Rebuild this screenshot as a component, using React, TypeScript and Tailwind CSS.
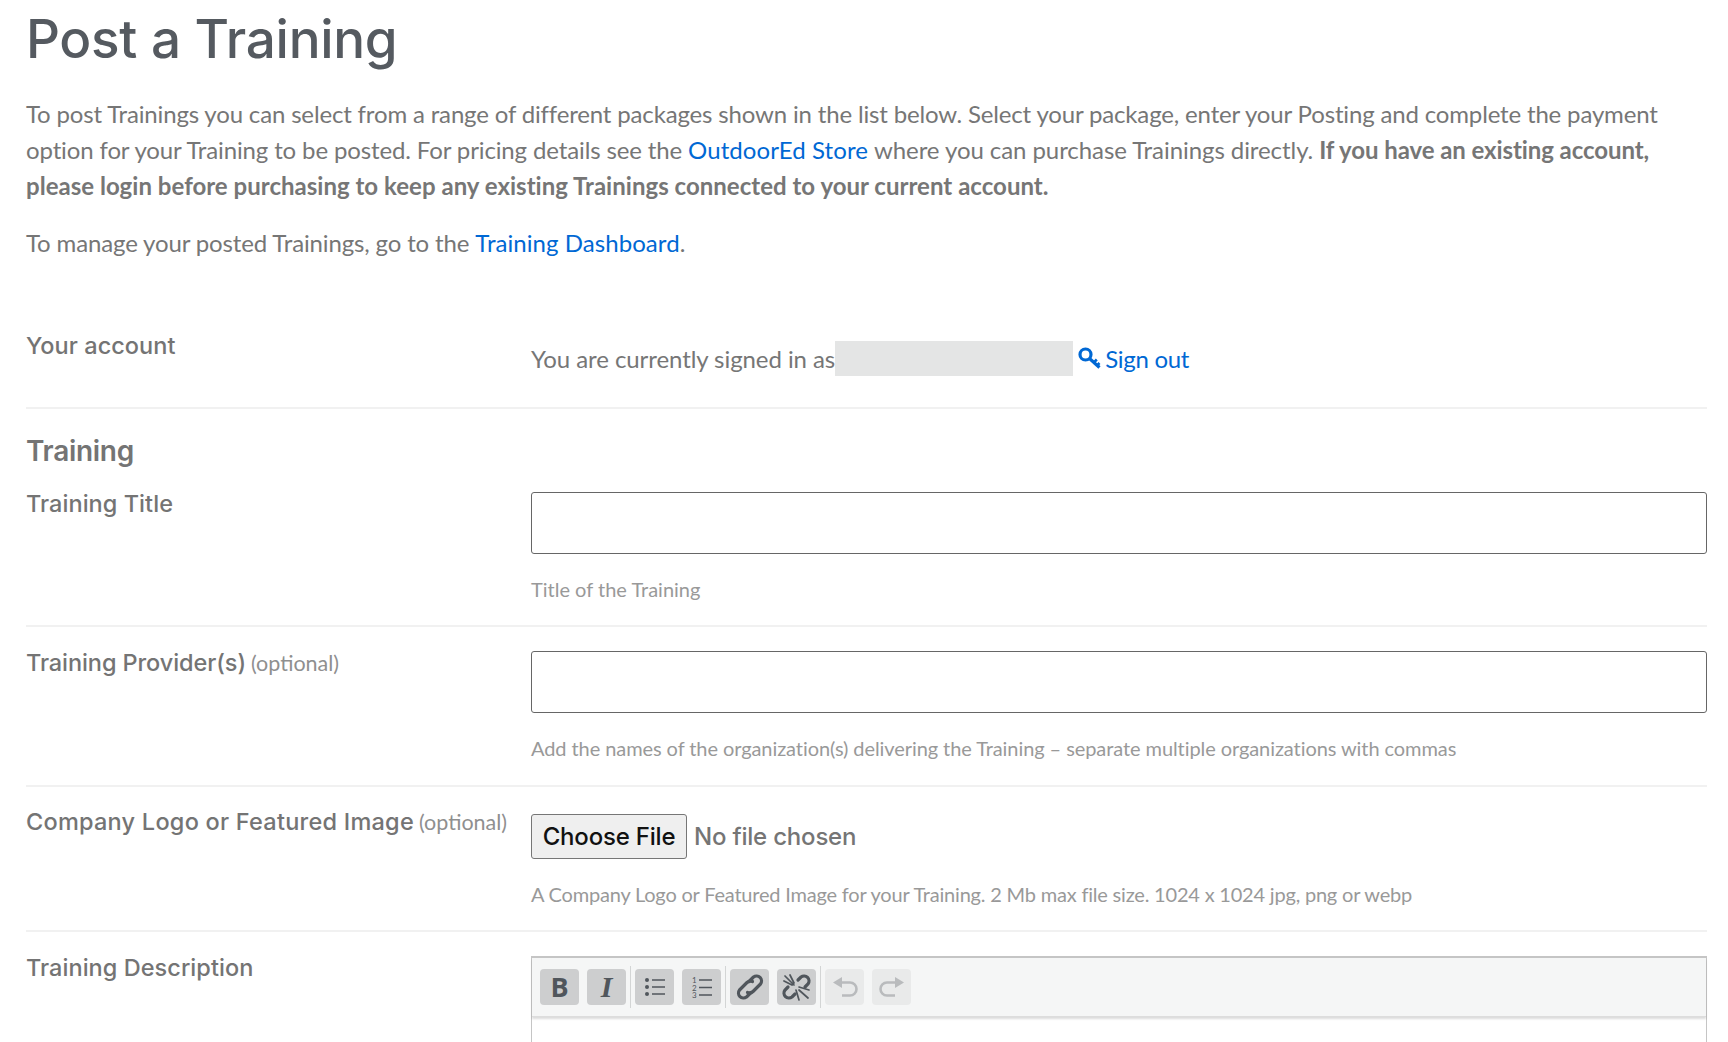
import React from "react";

const HEAD = "font-['Inter','Noto_Sans',sans-serif]";

function Btn({ children, off }: { children: React.ReactNode; off?: boolean }) {
  return (
    <span className={`flex h-[36px] w-[39px] items-center justify-center rounded-[4px] ${off ? "bg-[#e9eaea] text-[#b9bbbd]" : "bg-[#cdcecf] text-[#50565c]"}`}>
      {children}
    </span>
  );
}

const Sep = () => <span className="mx-[4px] h-[42px] w-px shrink-0 bg-[#d3d5d5]" />;

function Label({ children, optional, lift, track = "tracking-[0.05px]" }: { children: React.ReactNode; optional?: boolean; lift: string; track?: string }) {
  return (
    <div className={`w-[505px] shrink-0 whitespace-nowrap ${lift}`}>
      <span className={`${HEAD} text-[23.5px] font-medium text-[#747474] ${track}`}>{children}</span>
      {optional && <span className="ml-[5px] text-[21.5px] text-[#8f8f8f]">(optional)</span>}
    </div>
  );
}

const Hint = ({ children, track }: { children: React.ReactNode; track: string }) => (
  <p className={`mt-[19px] text-[20px] leading-[32px] text-[#999999] ${track}`}>{children}</p>
);

const TextBox = () => (
  <input type="text" aria-label="text" className="block h-[62px] w-full rounded-[3px] border border-[#666666] bg-white" />
);

export default function App() {
  return (
    <div className="h-[1042px] overflow-hidden bg-white pl-[26px] pr-[21px] font-['Lato',sans-serif] text-[24px] leading-[36px] text-[#767676]">
      <h1 className={`${HEAD} mb-[28px] pt-[10px] text-[53px] font-medium leading-[58px] tracking-[-0.3px] text-[#555a60]`}>Post a Training</h1>
      <p className="mb-[21px] tracking-[-0.16px]">
        To post Trainings you can select from a range of different packages shown in the list below. Select your package, enter your Posting and complete the payment{" "}
        <span className="tracking-[-0.13px]">option for your Training to be posted. For pricing details see the</span>{" "}
        <a className="tracking-[0.08px] text-[#0068d4]">OutdoorEd Store</a>{" "}
        <span className="tracking-[-0.07px]">where you can purchase Trainings directly.</span>{" "}
        <strong className="font-bold tracking-[-0.08px]">If you have an existing account,</strong>{" "}
        <strong className="font-bold tracking-[0.02px]">please login before purchasing to keep any existing Trainings connected to your current account.</strong>
      </p>
      <p className="tracking-[-0.14px]">
        To manage your posted Trainings, go to the <a className="tracking-[0.06px] text-[#0068d4]">Training Dashboard</a>.
      </p>

      <div className="mt-[68px] flex h-[80px] border-b-2 border-[#f1f1f1]">
        <Label lift="-mt-[2px]">Your account</Label>
        <div className="flex h-[36px] items-center pt-[23px]">
          <span className="whitespace-nowrap tracking-[-0.07px]">You are currently signed in as</span>
          <span className="h-[35px] w-[238px] bg-[#e4e5e5]" />
          <a className="ml-[5px] flex items-center gap-[4px] tracking-[-0.3px] text-[#0068d4]">
            <svg width="23" height="23" viewBox="0 0 23 23" fill="none" stroke="currentColor">
              <circle cx="7.5" cy="7.5" r="5.5" strokeWidth="3.2" />
              <path d="M11.5 11.5L21.5 20.5" strokeWidth="3.2" />
              <path d="M15.8 15.5l3-3M19 18.5l2.5-2.5" strokeWidth="2.6" />
            </svg>
            Sign out
          </a>
        </div>
      </div>

      <h2 className={`${HEAD} mt-[23px] text-[28px] font-semibold leading-[38px] tracking-[-0.3px] text-[#747474]`}>Training</h2>
      <div className="mt-[22px] flex h-[135px] border-b-2 border-[#f1f1f1]">
        <Label lift="-mt-[7px]">Training Title</Label>
        <div className="flex-1">
          <TextBox />
          <Hint track="">Title of the Training</Hint>
        </div>
      </div>

      <div className="flex h-[160px] border-b-2 border-[#f1f1f1] pt-[24px]">
        <Label optional lift="-mt-[7px]" track="tracking-[-0.08px]">Training Provider(s)</Label>
        <div className="flex-1">
          <TextBox />
          <Hint track="tracking-[-0.08px]">Add the names of the organization(s) delivering the Training – separate multiple organizations with commas</Hint>
        </div>
      </div>

      <div className="flex h-[145px] border-b-2 border-[#f1f1f1] pt-[27px]">
        <Label optional lift="-mt-[11px]" track="tracking-[0.24px]">Company Logo or Featured Image</Label>
        <div className="flex-1">
          <div className="flex items-center">
            <span className={`${HEAD} flex h-[45px] w-[156px] items-center justify-center rounded-[3px] border border-[#767676] bg-[#efefef] text-[24px] font-medium tracking-[-0.2px] text-[#111111]`}>Choose File</span>
            <span className={`${HEAD} ml-[7px] text-[24px] font-medium tracking-[-0.2px] text-[#757575]`}>No file chosen</span>
          </div>
          <Hint track="tracking-[-0.2px]">A Company Logo or Featured Image for your Training. 2 Mb max file size. 1024 x 1024 jpg, png or webp</Hint>
        </div>
      </div>

      <div className="flex pt-[24px]">
        <Label lift="-mt-[7px]">Training Description</Label>
        <div className="flex-1 border-x border-t-2 border-[#c5c5c5]">
          <div className="flex h-[59px] items-center border-b border-[#dddddd] bg-[#f5f6f6] pl-[8px] pb-[1px] shadow-[0_2px_2px_rgba(0,0,0,0.14)]">
            <Btn><span className="font-['Open_Sans',sans-serif] text-[27px] font-bold leading-none">B</span></Btn>
            <span className="w-[8px]" />
            <Btn><span className="font-['Liberation_Serif',serif] text-[30px] font-bold italic leading-none">I</span></Btn>
            <Sep />
            <Btn>
              <svg width="22" height="22" viewBox="0 0 22 22" fill="none" stroke="currentColor" strokeWidth="1.6">
                <circle cx="3" cy="4" r="2" fill="currentColor" stroke="none" />
                <circle cx="3" cy="11" r="2" fill="currentColor" stroke="none" />
                <circle cx="3" cy="18" r="2" fill="currentColor" stroke="none" />
                <path d="M8 4h13M8 11h13M8 18h13" />
              </svg>
            </Btn>
            <span className="w-[8px]" />
            <Btn>
              <svg width="22" height="24" viewBox="0 0 22 24" fill="none" stroke="currentColor" strokeWidth="1.6">
                <text x="1" y="8" fontSize="8" fill="currentColor" stroke="none" fontFamily="Lato">1</text>
                <text x="1" y="15.5" fontSize="8" fill="currentColor" stroke="none" fontFamily="Lato">2</text>
                <text x="1" y="23" fontSize="8" fill="currentColor" stroke="none" fontFamily="Lato">3</text>
                <path d="M8 5h13M8 12.5h13M8 20h13" />
              </svg>
            </Btn>
            <Sep />
            <Btn>
              <svg width="28" height="28" viewBox="0 0 28 28" fill="none" stroke="currentColor" strokeWidth="3.2" strokeLinecap="round" strokeLinejoin="round">
                <path d="M13 8.5l4.5-4.5a5 5 0 0 1 7 7L17 18.5a5 5 0 0 1-5.5 1" />
                <path d="M15 19.5l-4.5 4.5a5 5 0 0 1-7-7L11 9.5a5 5 0 0 1 5.5-1" />
              </svg>
            </Btn>
            <span className="w-[8px]" />
            <Btn>
              <svg width="30" height="28" viewBox="0 0 30 28" fill="none" stroke="currentColor" strokeLinecap="round">
                <path d="M16 7l3-3a5 5 0 0 1 7 7l-3 3" strokeWidth="3.2" />
                <path d="M13 21l-3 3a5 5 0 0 1-7-7l3-3" strokeWidth="3.2" />
                <path d="M3 3l9 9M8 2l4 8M2 8l8 4M17 17l9 8M17 14l10 3M14 17l3 10" strokeWidth="1.7" />
              </svg>
            </Btn>
            <Sep />
            <Btn off>
              <svg width="26" height="24" viewBox="0 0 26 24" fill="none">
                <path d="M10 2v11L1 7.5z" fill="currentColor" />
                <path d="M9 7.5h9a6.5 6.5 0 0 1 0 13h-8" stroke="currentColor" strokeWidth="2.6" />
              </svg>
            </Btn>
            <span className="w-[8px]" />
            <Btn off>
              <svg width="26" height="24" viewBox="0 0 26 24" fill="none">
                <path d="M16 2v11l9-5.5z" fill="currentColor" />
                <path d="M17 7.5H8a6.5 6.5 0 0 0 0 13h8" stroke="currentColor" strokeWidth="2.6" />
              </svg>
            </Btn>
          </div>
          <div className="h-[60px]" />
        </div>
      </div>
    </div>
  );
}
